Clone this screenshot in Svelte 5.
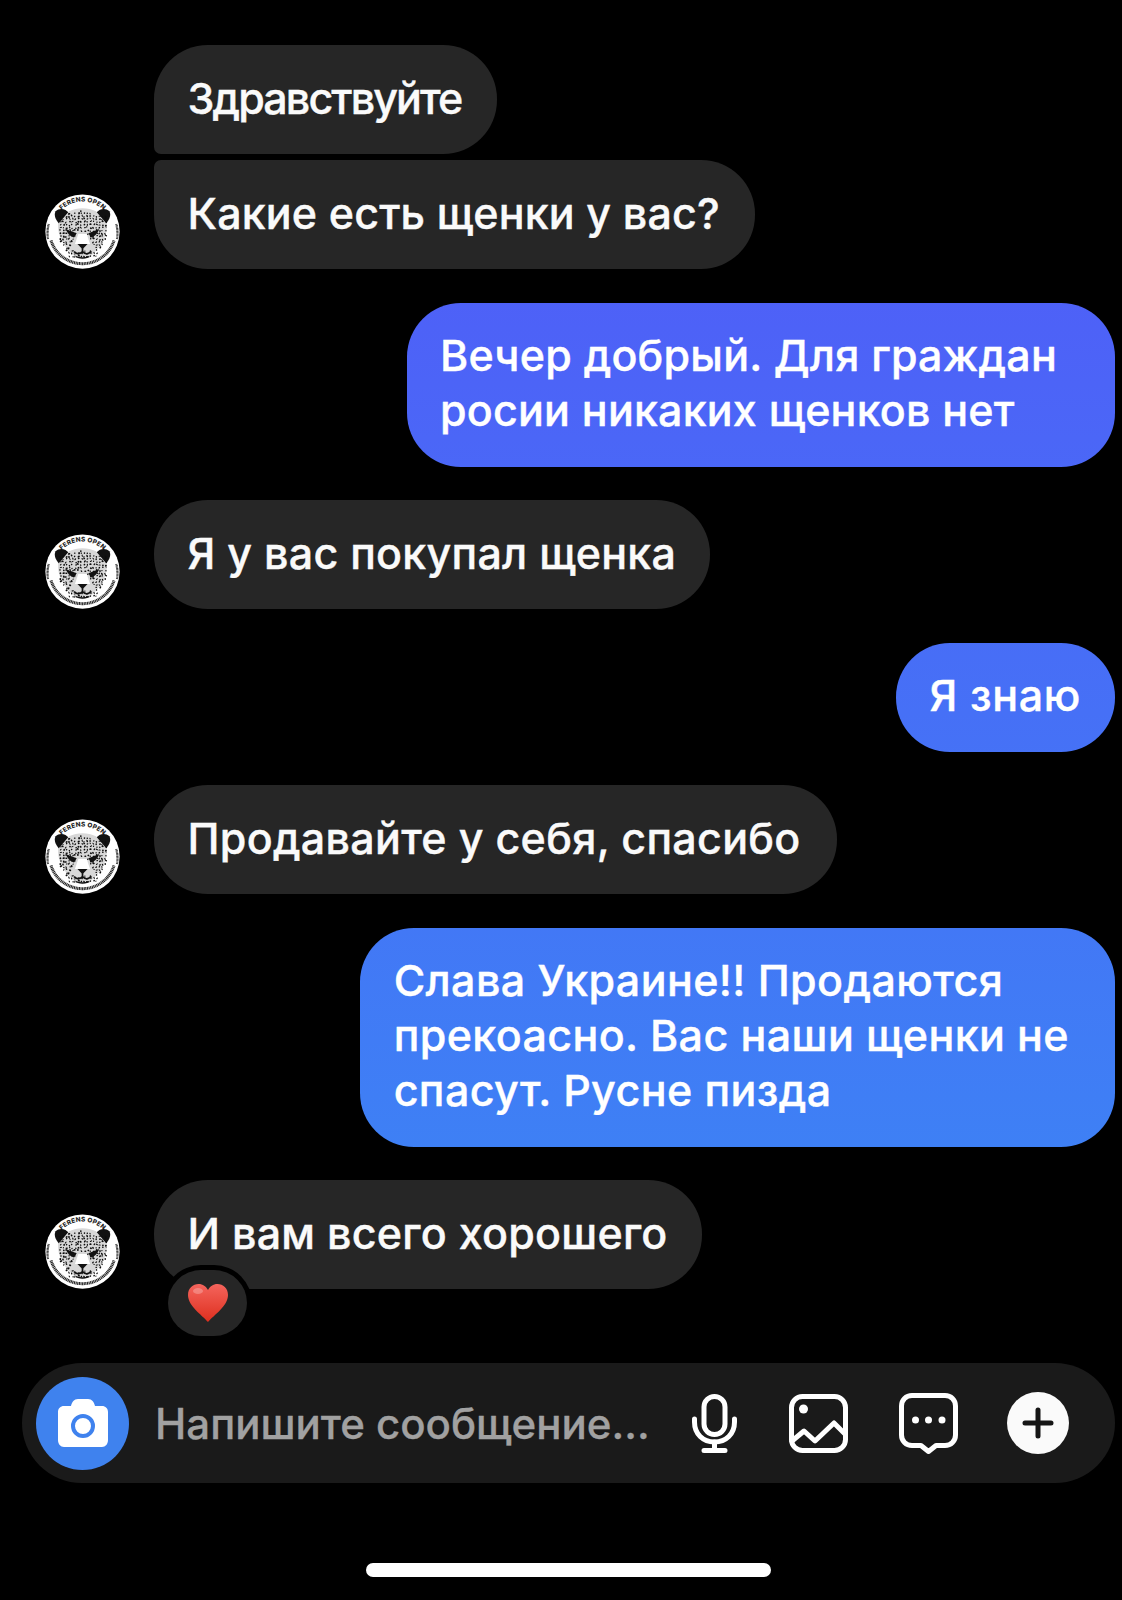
<script>
    const messages = [
        { id: 1, mine: false, text: 'Здравствуйте', kind: 'first', avatar: false, tracking: -1.9, padRight: 36 },
        { id: 2, mine: false, text: 'Какие есть щенки у вас?', kind: 'last', avatar: true, tracking: 0.15, padRight: 35 },
        { id: 3, mine: true, text: 'Вечер добрый. Для граждан\nросии никаких щенков нет', padRight: 58, tracking: 0.2 },
        { id: 4, mine: false, text: 'Я у вас покупал щенка', avatar: true, tracking: 0.25 },
        { id: 5, mine: true, text: 'Я знаю', tracking: 0.6 },
        { id: 6, mine: false, text: 'Продавайте у себя, спасибо', avatar: true, tracking: 0.3, padRight: 36 },
        { id: 7, mine: true, text: 'Слава Украине!! Продаются\nпрекоасно. Вас наши щенки не\nспасут. Русне пизда', padRight: 46, tracking: 0.4 },
        { id: 8, mine: false, text: 'И вам всего хорошего', avatar: true, reaction: true, tracking: 0.25 }
    ];

    // speckles for the leopard head on the avatar
    let seed = 4242;
    function rnd() {
        seed = (seed * 16807) % 2147483647;
        return seed / 2147483647;
    }
    for (let i = 0; i < 10; i++) rnd();
    const spots = [];
    for (let gy = 24; gy < 80; gy += 3.4) {
        for (let gx = 20; gx < 81; gx += 3.6) {
            let x = gx + (rnd() - 0.5) * 2;
            let y = gy + (rnd() - 0.5) * 2;
            let dx = (x - 50) / (29 - Math.max(0, y - 55) * 0.55);
            let inHead = Math.abs(dx) < 1 && y > 24 + Math.abs(x - 50) * 0.25;
            let inMuzzle = Math.abs(x - 50) < 6 + Math.max(0, y - 54) * 0.6 && y > 50 && y < 72;
            if (inHead && !inMuzzle) {
                spots.push({ x, y, rx: 0.8 + rnd() * 0.8, ry: 0.6 + rnd() * 0.5, r: rnd() * 180 });
            }
        }
    }
</script>

{#snippet avatar()}
    <svg class="avatar" viewBox="0 0 100 100">
        <circle cx="50" cy="50" r="49.500" fill="#fff" />
        <defs>
            <path id="arc-top" d="M10 50 A40 40 0 0 1 90 50" />
        </defs>
        <text class="ring-text"><textPath href="#arc-top" startOffset="50%" text-anchor="middle">FERENS OPEN</textPath></text>
        <path d="M8 62 A44 44 0 0 0 92 62" fill="none" stroke="#222" stroke-width="4" stroke-dasharray="1.500 0.700" />
        <path d="M4 60 A46 46 0 0 1 5 40" fill="none" stroke="#333" stroke-width="3" stroke-dasharray="1.300 0.600" />
        <path d="M96 60 A46 46 0 0 0 95 40" fill="none" stroke="#333" stroke-width="3" stroke-dasharray="1.300 0.600" />
        <g transform="translate(50 50) scale(1.12) translate(-50 -49)">
            <path d="M18 25 C23 20 30 22 34 27 L24 42 C19 37 15 30 18 25Z" fill="#111" />
            <path d="M82 25 C77 20 70 22 66 27 L76 42 C81 37 85 30 82 25Z" fill="#111" />
            <path d="M34 25 C44 20 56 20 66 25 L79 40 C80 52 74 64 65 73 C60 79 55 82 50 82 C45 82 40 79 35 73 C26 64 20 52 21 40Z" fill="#d8d8d8" />
            {#each spots as s}
                <ellipse cx={s.x} cy={s.y} rx={s.rx} ry={s.ry} transform="rotate({s.r} {s.x} {s.y})" fill="#0c0c0c" />
            {/each}
            <path d="M30 46 L43 51 L40 56 C35 55 32 51 30 46Z" fill="#111" />
            <path d="M70 46 L57 51 L60 56 C65 55 68 51 70 46Z" fill="#111" />
            <path d="M45 52 L55 52 L59 64 L41 64Z" fill="#fff" />
            <path d="M44 64 L56 64 L50 70Z" fill="#111" />
            <path d="M50 69 L50 73 M40 73 C45 78 48 75 50 73 C52 75 55 78 60 73" fill="none" stroke="#111" stroke-width="2" />
            <path d="M42 79 C47 81 53 81 58 79" fill="none" stroke="#111" stroke-width="1.600" />
        </g>
    </svg>
{/snippet}

<main>
    <section class="thread">
        {#each messages as m (m.id)}
            <div class="row" class:mine={m.mine} class:grouped={m.kind === 'last'}>
                {#if !m.mine}
                    <div class="avatar-slot">
                        {#if m.avatar}{@render avatar()}{/if}
                    </div>
                {/if}
                <div class="bubble {m.kind || ''}" class:out={m.mine}
                    style:letter-spacing={m.tracking ? m.tracking + 'px' : null}
                    style:padding-right={m.padRight ? m.padRight + 'px' : null}>
                    {m.text}
                    {#if m.reaction}
                        <div class="reaction">
                            <svg viewBox="0 0 40 38" width="40" height="38">
                                <defs>
                                    <linearGradient id="heart" x1="0" y1="0" x2="0" y2="1">
                                        <stop offset="0" stop-color="#f4645c" />
                                        <stop offset="1" stop-color="#de2f1e" />
                                    </linearGradient>
                                </defs>
                                <path d="M20 38 C14 31 0 22 0 11 C0 4 5 0 10.500 0 C15 0 18 2.500 20 6 C22 2.500 25 0 29.500 0 C35 0 40 4 40 11 C40 22 26 31 20 38Z" fill="url(#heart)" />
                                <ellipse cx="10" cy="7" rx="5" ry="3" fill="#fff" opacity="0.25" />
                            </svg>
                        </div>
                    {/if}
                </div>
            </div>
        {/each}
    </section>

    <div class="composer">
        <div class="camera">
            <svg viewBox="0 0 50 48" width="50" height="48">
                <path d="M6 7 H13 C14 3 16 0 20 0 H30 C34 0 36 3 37 7 H44 C47.500 7 50 9.500 50 13 V41 C50 45 47.500 48 44 48 H6 C2.500 48 0 45 0 41 V13 C0 9.500 2.500 7 6 7Z" fill="#fff" />
                <circle cx="25" cy="27" r="10" fill="#fff" stroke="#3f82ee" stroke-width="4" />
            </svg>
        </div>
        <span class="placeholder">Напишите сообщение...</span>
        <div class="actions">
            <svg class="mic" viewBox="0 0 45 59" width="45" height="59" fill="none" stroke="#fff" stroke-width="5" stroke-linecap="round">
                <rect x="12" y="2.500" width="21" height="38" rx="10.500" />
                <path d="M2.500 25 V28 C2.500 40 11 48 22.500 48 C34 48 42.500 40 42.500 28 V25" />
                <path d="M22.500 48 V56.500 M12 56.500 H33" />
            </svg>
            <svg class="pic" viewBox="0 0 59 59" width="59" height="59" fill="none" stroke="#fff" stroke-width="5" stroke-linejoin="round">
                <rect x="2.500" y="2.500" width="54" height="54" rx="11" />
                <circle cx="14.500" cy="15" r="4.500" fill="#fff" stroke="none" />
                <path d="M3 47 L15 37 L26 47 L45 29 L56 40" stroke-linecap="round" />
            </svg>
            <svg class="more" viewBox="0 0 59 61" width="59" height="61" fill="none" stroke="#fff" stroke-width="5" stroke-linejoin="round">
                <path d="M13 2.500 H46 C52 2.500 56.500 7 56.500 13 V42 C56.500 48 52 52.500 46 52.500 H37 L29.500 58.500 L22 52.500 H13 C7 52.500 2.500 48 2.500 42 V13 C2.500 7 7 2.500 13 2.500Z" />
                <circle cx="16.500" cy="27" r="3.500" fill="#fff" stroke="none" />
                <circle cx="29.500" cy="27" r="3.500" fill="#fff" stroke="none" />
                <circle cx="43" cy="27" r="3.500" fill="#fff" stroke="none" />
            </svg>
            <div class="plus">
                <svg viewBox="0 0 32 32" width="32" height="32" stroke="#151515" stroke-width="5" stroke-linecap="round">
                    <path d="M16 3 V29 M3 16 H29" />
                </svg>
            </div>
        </div>
    </div>

    <div class="home-bar"></div>
</main>

<style>
:global(body) {
    background: #000;
}

main {
    min-height: 1600px;
    box-sizing: border-box;
    padding: 45px 7px 22px 22px;
    display: flex;
    flex-direction: column;
    background: #000;
    color: #fafafa;
    font-family: Inter, "Liberation Sans", sans-serif;
    overflow: hidden;
}

.thread {
    display: flex;
    flex-direction: column;
    gap: 33.500px;
}

.row {
    display: flex;
    align-items: flex-end;
    gap: 0;
    &.mine {
        justify-content: flex-end;
    }
    &.grouped {
        margin-top: -27.500px;
    }
}

.avatar-slot {
    width: 132px;
    flex: none;
    display: flex;
    padding-left: 23px;
    box-sizing: border-box;
}

.avatar {
    width: 75px;
    height: 75px;
    display: block;
}

.ring-text {
    font-size: 8.500px;
    font-weight: 800;
    fill: #222;
    letter-spacing: 0.300px;
}

.bubble {
    position: relative;
    padding: 25.500px 34px 28.550px 33.500px;
    font-size: 43px;
    line-height: 55px;
    font-weight: 500;
    -webkit-text-stroke: 0.4px currentColor;
    letter-spacing: 0.100px;
    white-space: pre-line;
    background: #262626;
    border-radius: 54px;
    &.first {
        border-bottom-left-radius: 7px;
    }
    &.last {
        border-top-left-radius: 7px;
    }
    &.out {
        background: linear-gradient(180deg, #5356f8 0, #3e80f5 1150px) fixed;
        color: #fff;
    }
}

.reaction {
    position: absolute;
    left: 14px;
    top: 90px;
    width: 79px;
    height: 66px;
    border-radius: 33px;
    background: #262626;
    box-shadow: 0 0 0 5px #000;
    display: flex;
    align-items: center;
    justify-content: center;
}

.composer {
    margin-top: 74px;
    height: 120px;
    border-radius: 60px;
    background: #1a1a1a;
    display: flex;
    align-items: center;
    padding: 0 46px 0 14px;
}

.camera {
    width: 93px;
    height: 93px;
    flex: none;
    border-radius: 50%;
    background: #3f82ee;
    display: flex;
    align-items: center;
    justify-content: center;
}

.placeholder {
    margin-left: 26px;
    font-size: 42px;
    font-weight: 500;
    -webkit-text-stroke: 0.3px currentColor;
    color: #a1a1a1;
    white-space: nowrap;
}

.actions {
    margin-left: auto;
    display: flex;
    align-items: center;
    gap: 50px;
    svg {
        display: block;
    }
    .mic {
        margin-right: 2px;
    }
    .more {
        margin-left: 1px;
        margin-right: -1px;
    }
}

.plus {
    width: 62px;
    height: 62px;
    border-radius: 50%;
    background: #fafafa;
    display: flex;
    align-items: center;
    justify-content: center;
}

.home-bar {
    width: 405px;
    height: 14px;
    border-radius: 7px;
    background: #fff;
    margin: 80px auto 0;
    align-self: center;
}
</style>
